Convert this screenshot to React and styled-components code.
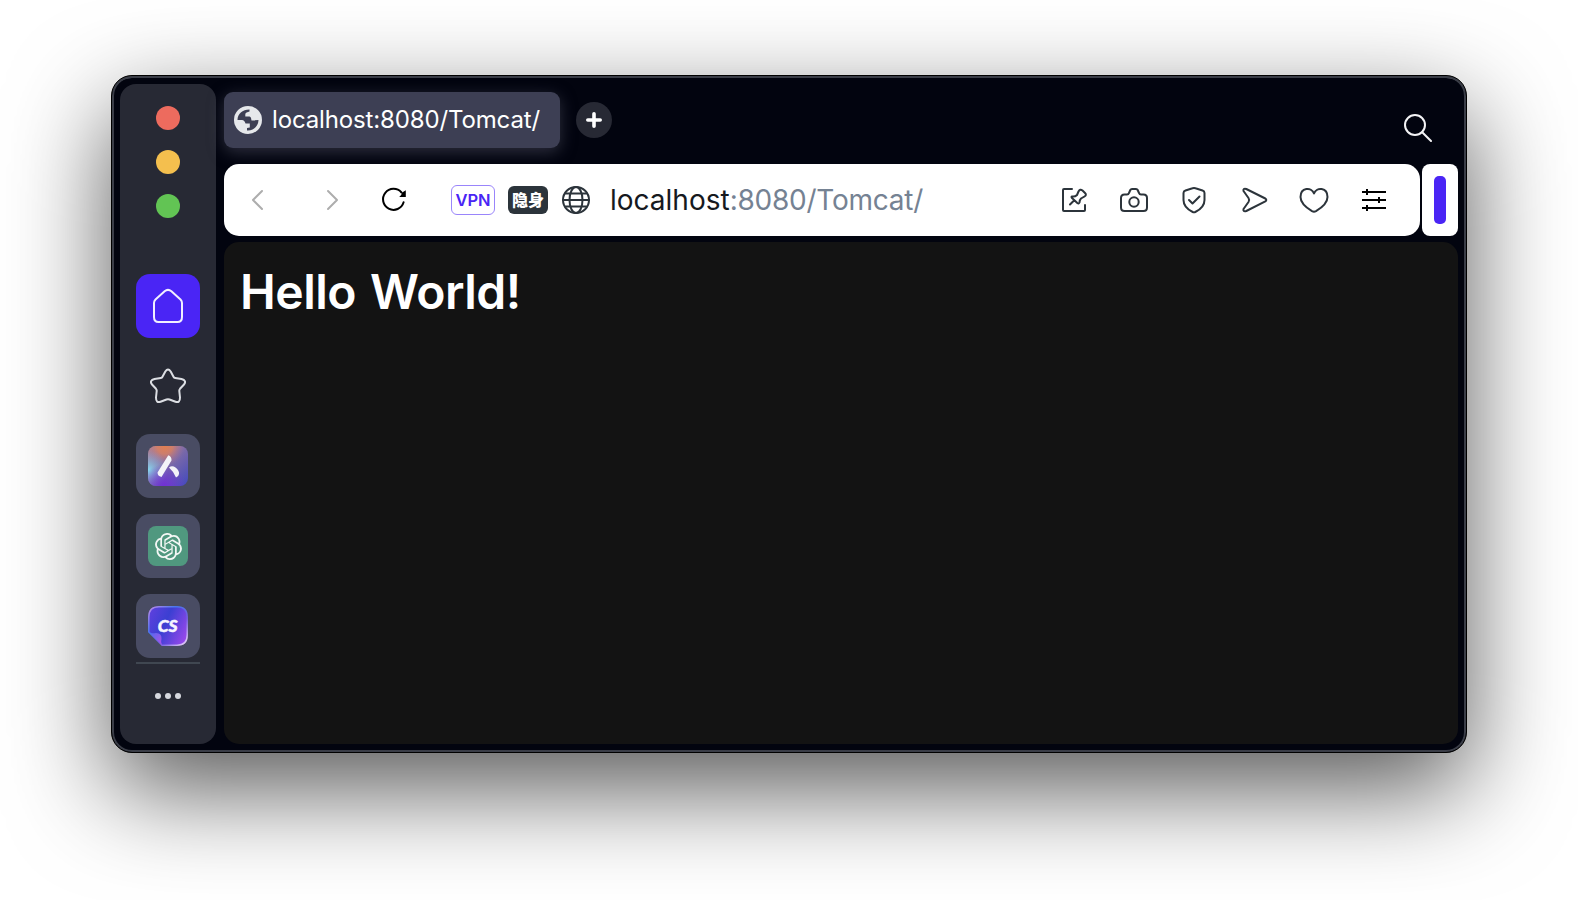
import React from "react";
import styled, { createGlobalStyle } from "styled-components";
import { SiOpenai } from "react-icons/si";

const GlobalStyle = createGlobalStyle`
  * { box-sizing: border-box; }
  body { margin: 0; background: #fff; font-family: Inter, "Liberation Sans", sans-serif; overflow: hidden; }
  svg { display: block; flex: none; }
`;

const Page = styled.div`
  height: 900px;
  padding: 75px 111px 147px;
`;
const Window = styled.div`
  height: 678px;
  display: flex;
  gap: 8px;
  padding: 8px;
  border: 1px solid #000;
  border-radius: 21px;
  background: #02040f;
  box-shadow: inset 0 0 0 2px #3a3d47, inset 0 3px 0 -1px #62646b, 0 36px 100px rgba(0, 0, 0, 0.66);
`;
const Sidebar = styled.nav`
  width: 96px;
  flex: none;
  display: flex;
  flex-direction: column;
  align-items: center;
  border-radius: 16px;
  background: #272934;
`;
const Lights = styled.div`
  display: flex;
  flex-direction: column;
  gap: 20px;
  padding-top: 22px;
  margin-bottom: 56px;
`;
const Light = styled.span`
  width: 24px;
  height: 24px;
  border-radius: 50%;
  background: ${(p) => p.$color};
`;
const Dock = styled.div`
  display: flex;
  flex-direction: column;
  gap: 16px;
`;
const DockItem = styled.button`
  width: 64px;
  height: 64px;
  padding: 0;
  border: 0;
  border-radius: 14px;
  display: grid;
  place-items: center;
  background: ${(p) => p.$bg || "transparent"};
`;
const GptTile = styled.span`
  width: 40px;
  height: 40px;
  border-radius: 8px;
  display: grid;
  place-items: center;
  color: #f3f7f5;
  background: #50987f;
`;
const Divider = styled.div`
  width: 64px;
  height: 2px;
  margin: 4px 0 28px;
  background: #404751;
`;
const Main = styled.main`
  flex: 1;
  min-width: 0;
  display: flex;
  flex-direction: column;
`;
const TabStrip = styled.header`
  height: 80px;
  flex: none;
  display: flex;
  align-items: flex-start;
  padding: 8px 26px 0 0;
`;
const Tab = styled.div`
  width: 336px;
  height: 56px;
  display: flex;
  align-items: center;
  gap: 10px;
  padding-left: 10px;
  border-radius: 9px;
  background: #3d3f54;
  box-shadow: 0 4px 16px rgba(90, 90, 110, 0.5);
`;
const TabTitle = styled.span`
  color: #fff;
  font-size: 24px;
  line-height: 28px;
  letter-spacing: -0.14px;
  white-space: nowrap;
`;
const NewTab = styled.button`
  width: 36px;
  height: 36px;
  margin: 10px 0 0 16px;
  padding: 0;
  border: 0;
  border-radius: 50%;
  display: grid;
  place-items: center;
  background: #272934;
`;
const SearchSlot = styled.div`
  margin: 22px 0 0 auto;
`;
const Bars = styled.div`
  height: 72px;
  flex: none;
  display: flex;
  gap: 2px;
`;
const AddressBar = styled.div`
  width: 1196px;
  display: flex;
  align-items: center;
  padding: 0 30px 0 26px;
  border-radius: 15px;
  background: #fff;
`;
const NavGroup = styled.div`
  display: flex;
  align-items: center;
  gap: 60px;
  margin-right: 38px;
`;
const Badges = styled.div`
  display: flex;
  align-items: center;
  gap: 13px;
  margin: 0 14px 0 43px;
`;
const Badge = styled.span`
  display: grid;
  place-items: center;
  width: ${(p) => p.$w}px;
  height: ${(p) => p.$h}px;
  padding-bottom: ${(p) => (p.$outline ? 0 : 2)}px;
  border: ${(p) => (p.$outline ? "1.5px solid #9a85fb" : "0")};
  border-radius: 6px;
  background: ${(p) => (p.$outline ? "#fff" : "#2c343b")};
  color: ${(p) => (p.$outline ? "#4a25f5" : "#fff")};
  font: ${(p) => (p.$outline ? '600 16.5px/20px Inter, sans-serif' : '900 16px/20px "Noto Sans CJK SC", sans-serif')};
`;
const Url = styled.span`
  margin-left: 20px;
  color: #16191e;
  font-size: 28px;
  line-height: 36px;
  white-space: nowrap;
`;
const UrlRest = styled.span`
  color: #758293;
  letter-spacing: -0.25px;
`;
const Actions = styled.div`
  margin-left: auto;
  display: flex;
  gap: 28px;
`;
const SidePanel = styled.div`
  width: 36px;
  display: grid;
  place-items: center;
  border-radius: 8px;
  background: #fff;
`;
const Pill = styled.span`
  width: 12px;
  height: 48px;
  border-radius: 5px;
  background: #4a25f5;
`;
const Content = styled.section`
  flex: 1;
  margin-top: 6px;
  padding: 22px 16px;
  border-radius: 15px;
  background: #131313;
`;
const Heading = styled.h1`
  margin: 0;
  color: #fff;
  font-size: 48px;
  font-weight: 600;
  line-height: 56px;
  letter-spacing: -0.5px;
  word-spacing: 2.5px;
`;

function Icon({ w = 32, h = w, stroke = "#2c343b", sw = 2, children }) {
  return (
    <svg width={w} height={h} viewBox={`0 0 ${w} ${h}`} fill="none" stroke={stroke} strokeWidth={sw} strokeLinecap="round" strokeLinejoin="round">
      {children}
    </svg>
  );
}

const GlobeFill = () => (
  <Icon w={28} stroke="none">
    <circle cx="14" cy="14" r="14" fill="#e6e8eb" />
    <path fill="#3d3f54" d="M3.5 14C3.6 8 8.400 3.500 15.500 3.500V5.500L12.600 6.500Q11.300 7 11.300 8.500V10.500H15.500Q16.600 10.600 17 12L17.500 14.500L24.500 14C24.300 20 20 24.500 14 24.500H13V22L15.800 21.500V17.500H11.500Q10.500 14.200 8 14Z" />
  </Icon>
);

const AriaLogo = () => (
  <svg width="40" height="40" viewBox="0 0 40 40">
    <defs>
      <linearGradient id="aBase" x1="0" y1="0" x2="1" y2="1"><stop offset="0" stopColor="#b58a91" /><stop offset="1" stopColor="#4149bf" /></linearGradient>
      <radialGradient id="aOrange" cx=".42" cy="0" r=".5"><stop offset="0" stopColor="#e27f50" /><stop offset=".4" stopColor="#d67f64" stopOpacity=".85" /><stop offset="1" stopColor="#a070a0" stopOpacity="0" /></radialGradient>
      <radialGradient id="aCyan" cx="0" cy=".6" r=".5"><stop offset="0" stopColor="#86d8ee" /><stop offset="1" stopColor="#86a8e0" stopOpacity="0" /></radialGradient>
      <radialGradient id="aViolet" cx=".4" cy="1" r=".55"><stop offset="0" stopColor="#7130d4" /><stop offset="1" stopColor="#7130d4" stopOpacity="0" /></radialGradient>
    </defs>
    <g>
      <rect width="40" height="40" rx="8" fill="url(#aBase)" />
      <rect width="40" height="40" rx="8" fill="url(#aOrange)" />
      <rect width="40" height="40" rx="8" fill="url(#aCyan)" />
      <rect width="40" height="40" rx="8" fill="url(#aViolet)" />
    </g>
    <path fill="#f3f3f8" d="M20.300 9.300Q23.800 10.500 23.500 14.500L13.500 31Q9.500 30 9.500 26.500ZM21 21.500Q24 19 27.500 21.500Q31.500 24.500 31 28Q30.500 31 28 31.500Q26 26 21 21.500Z" />
  </svg>
);

const CsLogo = () => (
  <svg width="40" height="40" viewBox="0 0 40 40">
    <defs>
      <linearGradient id="cFill" x1="0" y1=".3" x2="1" y2=".75"><stop offset="0" stopColor="#5940dc" /><stop offset=".4" stopColor="#3b3fd2" /><stop offset="1" stopColor="#9748eb" /></linearGradient>
      <linearGradient id="cEdge" x1="0" y1="0" x2="1" y2="1"><stop offset="0" stopColor="#c08bea" /><stop offset=".35" stopColor="#4776ed" /><stop offset=".65" stopColor="#7560df" /><stop offset="1" stopColor="#f0d8fa" /></linearGradient>
      <linearGradient id="cFold" x1="0" y1="0" x2="1" y2="1"><stop offset="0" stopColor="#4b6cf0" /><stop offset="1" stopColor="#b94ee8" /></linearGradient>
    </defs>
    <path fill="url(#cFill)" stroke="url(#cEdge)" strokeWidth="1.500" d="M11 .8H29Q39.200 .8 39.200 11V29Q39.200 39.200 29 39.200H14L.8 26V11Q.8 .8 11 .8Z" />
    <path fill="url(#cFold)" d="M.8 26Q3 28 8 27Q14 27 13.500 33Q12.500 37 14.500 39.500Z" />
    <text x="19.700" y="26" textAnchor="middle" fill="#f6f4ff" stroke="#f6f4ff" strokeWidth=".5" fontFamily="Lato, sans-serif" fontWeight="900" fontStyle="italic" fontSize="17.500">CS</text>
  </svg>
);

export default function App() {
  return (
    <>
      <GlobalStyle />
      <Page>
        <Window>
          <Sidebar>
            <Lights>
              <Light $color="#ed6b5e" />
              <Light $color="#f4bf4e" />
              <Light $color="#62c454" />
            </Lights>
            <Dock>
              <DockItem $bg="#4a25f5">
                <Icon w={32} h={36} stroke="#f1efff">
                  <path d="M12.600 3.200Q16 .5 19.400 3.200L28.500 11.500Q30 13 30 15V29Q30 34 25.500 34H6.500Q2 34 2 29V15Q2 13 3.500 11.500Z" />
                </Icon>
              </DockItem>
              <DockItem>
                <Icon w={36} stroke="#dcdee3">
                  <path d="M15.300 3.500Q18-.5 20.700 3.500L23.500 8.700Q24 9.700 25.200 9.900L31.500 11Q37 12.500 34 16.500L30 20.800Q29.200 21.700 29.300 23L30 29.500Q30 35.500 25.500 33.700L19.500 31.500Q18 31 16.500 31.500L10.500 33.700Q6 35.500 6 29.500L6.700 23Q6.800 21.700 6 20.800L2 16.500Q-1 12.500 4.500 11L10.800 9.900Q12 9.700 12.500 8.700Z" />
                </Icon>
              </DockItem>
              <DockItem $bg="#494c63"><AriaLogo /></DockItem>
              <DockItem $bg="#494c63"><GptTile><SiOpenai size={27} /></GptTile></DockItem>
              <DockItem $bg="#494c63"><CsLogo /></DockItem>
            </Dock>
            <Divider />
            <Icon w={26} h={8} stroke="none">
              <g fill="#d6d8de"><circle cx="3" cy="4" r="3" /><circle cx="13" cy="4" r="3" /><circle cx="23" cy="4" r="3" /></g>
            </Icon>
          </Sidebar>
          <Main>
            <TabStrip>
              <Tab>
                <GlobeFill />
                <TabTitle>localhost:8080/Tomcat/</TabTitle>
              </Tab>
              <NewTab><Icon w={16} stroke="#fff" sw={3.6}><path d="M8 1.800V14.200M1.800 8H14.200" /></Icon></NewTab>
              <SearchSlot>
                <Icon w={28} stroke="#f3f3f5"><circle cx="11" cy="11" r="10" /><path d="M18.200 18.200L27 27" /></Icon>
              </SearchSlot>
            </TabStrip>
            <Bars>
              <AddressBar>
                <NavGroup>
                  <Icon w={16} h={24} stroke="#adadad"><path d="M12 3L3 12L12 21" /></Icon>
                  <Icon w={16} h={24} stroke="#adadad"><path d="M2 3L11 12L2 21" /></Icon>
                </NavGroup>
                <Icon w={28} stroke="#000"><path d="M21.500 6.500A10.500 10.500 0 1 0 23.600 16.300" /><path fill="#000" stroke="none" d="M25.800 4.300V11H19.200Q21.500 9.500 22.200 6.500Z" /></Icon>
                <Badges>
                  <Badge $outline $w={44} $h={30}>VPN</Badge>
                  <Badge $w={40} $h={28}>隐身</Badge>
                </Badges>
                <Icon w={28}><circle cx="14" cy="14" r="13" /><ellipse cx="14" cy="14" rx="6.500" ry="13" /><path d="M1 14H27M3.500 7.500H24.500M3.500 20.500H24.500" /></Icon>
                <Url>localhost<UrlRest>:8080/Tomcat/</UrlRest></Url>
                <Actions>
                  <Icon><path d="M14 5H6Q5 5 5 6V26Q5 27 6 27H26Q27 27 27 26V21" /><path d="M12 20.500L16 16.500M14 12.500Q17 13 19 11L20.500 7.500Q22 4.500 24.500 6.500L27 9Q29 11 26.500 12.500L23 14.500Q21.500 16 21.500 18.500Q20.800 20.300 19.300 19L14 14Q13 12.800 14 12.500Z" /></Icon>
                  <Icon><path d="M11 9L12.300 6Q12.800 5 14 5H18Q19.200 5 19.700 6L21 9Q21.500 10.500 23 10.500H25.500Q29 10.500 29 14V23.500Q29 27 25.500 27H6.500Q3 27 3 23.500V14Q3 10.500 6.500 10.500H9Q10.500 10.500 11 9Z" /><circle cx="16" cy="18" r="4.700" /></Icon>
                  <Icon><path d="M14.500 4.300Q16 3.700 17.500 4.300L24.500 6.500Q26.500 7.200 26.500 9V16Q26.500 23.500 17.300 28Q16 28.600 14.700 28Q5.500 23.500 5.500 16V9Q5.500 7.200 7.500 6.500Z" /><path d="M11 16L14.500 19.500L21.500 12.500" /></Icon>
                  <Icon><path d="M8.300 5L27.300 14.500Q29.300 16 27.300 17.300L8.300 27Q4.800 28 5.500 25L10.500 18Q11.800 16 10.500 14L5.500 7Q4.800 4 8.300 5Z" /></Icon>
                  <Icon><path d="M16 9.500C13.500 2.500 2.500 3.500 2.500 13C2.500 18 8 23.500 14 27.200Q16 28.300 18 27.200C24 23.500 29.500 18 29.500 13C29.500 3.500 18.500 2.500 16 9.500Z" /></Icon>
                  <Icon stroke="#000"><path strokeLinecap="butt" d="M4 8H28M4 16H28M4 24H28M9 5V11M21 13V19M9 21V27" /></Icon>
                </Actions>
              </AddressBar>
              <SidePanel><Pill /></SidePanel>
            </Bars>
            <Content><Heading>Hello World!</Heading></Content>
          </Main>
        </Window>
      </Page>
    </>
  );
}
